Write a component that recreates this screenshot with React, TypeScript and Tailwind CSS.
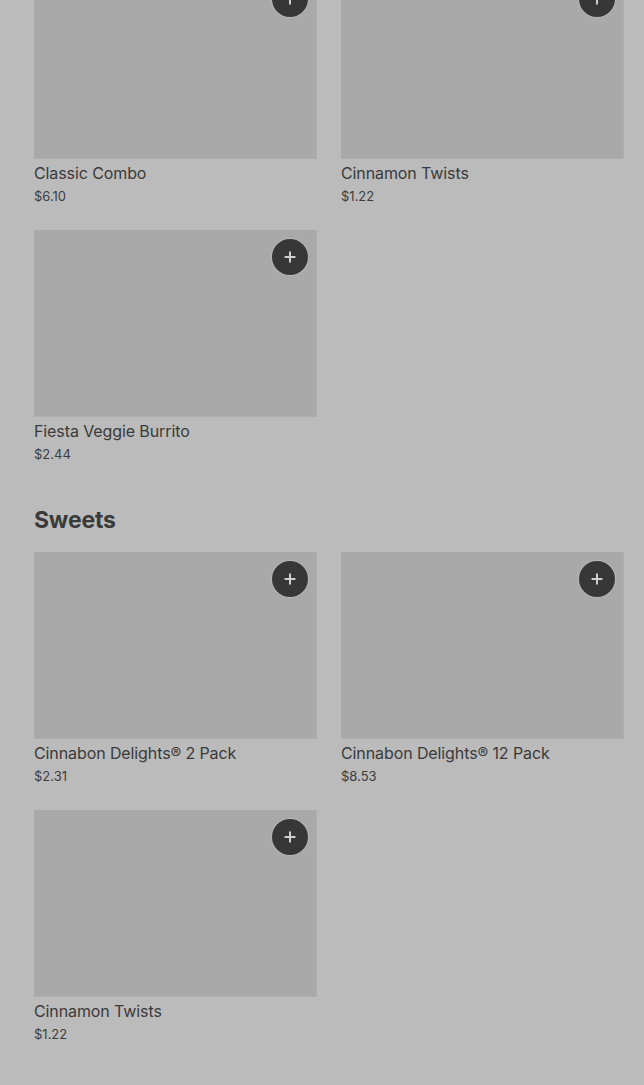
import { Plus } from "lucide-react";

type Item = { name: string; price: string };

const sections: { title?: string; items: Item[] }[] = [
  {
    items: [
      { name: "Classic Combo", price: "$6.10" },
      { name: "Cinnamon Twists", price: "$1.22" },
      { name: "Fiesta Veggie Burrito", price: "$2.44" },
    ],
  },
  {
    title: "Sweets",
    items: [
      { name: "Cinnabon Delights® 2 Pack", price: "$2.31" },
      { name: "Cinnabon Delights® 12 Pack", price: "$8.53" },
      { name: "Cinnamon Twists", price: "$1.22" },
    ],
  },
  { title: "Drinks", items: [] },
];

function ItemCard({ name, price }: Item) {
  return (
    <div className="flex flex-col">
      <div className="relative h-[187px] bg-[#a9a9a9] shadow-[inset_-1px_-1px_0_rgba(255,255,255,0.06)]">
        <button className="absolute right-[9px] top-[9px] flex h-9 w-9 items-center justify-center rounded-full bg-[#373737] text-[#cfcfcf] ring-1 ring-[#c4c4c4]/50">
          <Plus size={16} strokeWidth={3} />
        </button>
      </div>
      <div className="mt-[2px] text-[16px] leading-6 tracking-[-0.1px] text-[#3a3a3a]">{name}</div>
      <div className="mt-[1px] text-[13px] leading-5 text-[#3d3d3d]">{price}</div>
    </div>
  );
}

export default function App() {
  return (
    <div
      className="min-h-[1085px] overflow-hidden bg-[#bbbbbb] pl-[34px] pr-5"
      style={{ fontFamily: "Inter, 'Noto Sans', sans-serif" }}
    >
      <div className="-mt-[28px] flex flex-col gap-10">
        {sections.map((s, i) => (
          <section key={i}>
            {s.title && (
              <h2 className="mb-4 text-[23px] font-bold leading-8 tracking-[-0.2px] text-[#3a3a3a]">
                {s.title}
              </h2>
            )}
            {s.items.length > 0 && (
              <div className="grid grid-cols-2 gap-x-6 gap-y-6">
                {s.items.map((it, j) => (
                  <ItemCard key={j} {...it} />
                ))}
              </div>
            )}
          </section>
        ))}
      </div>
    </div>
  );
}
